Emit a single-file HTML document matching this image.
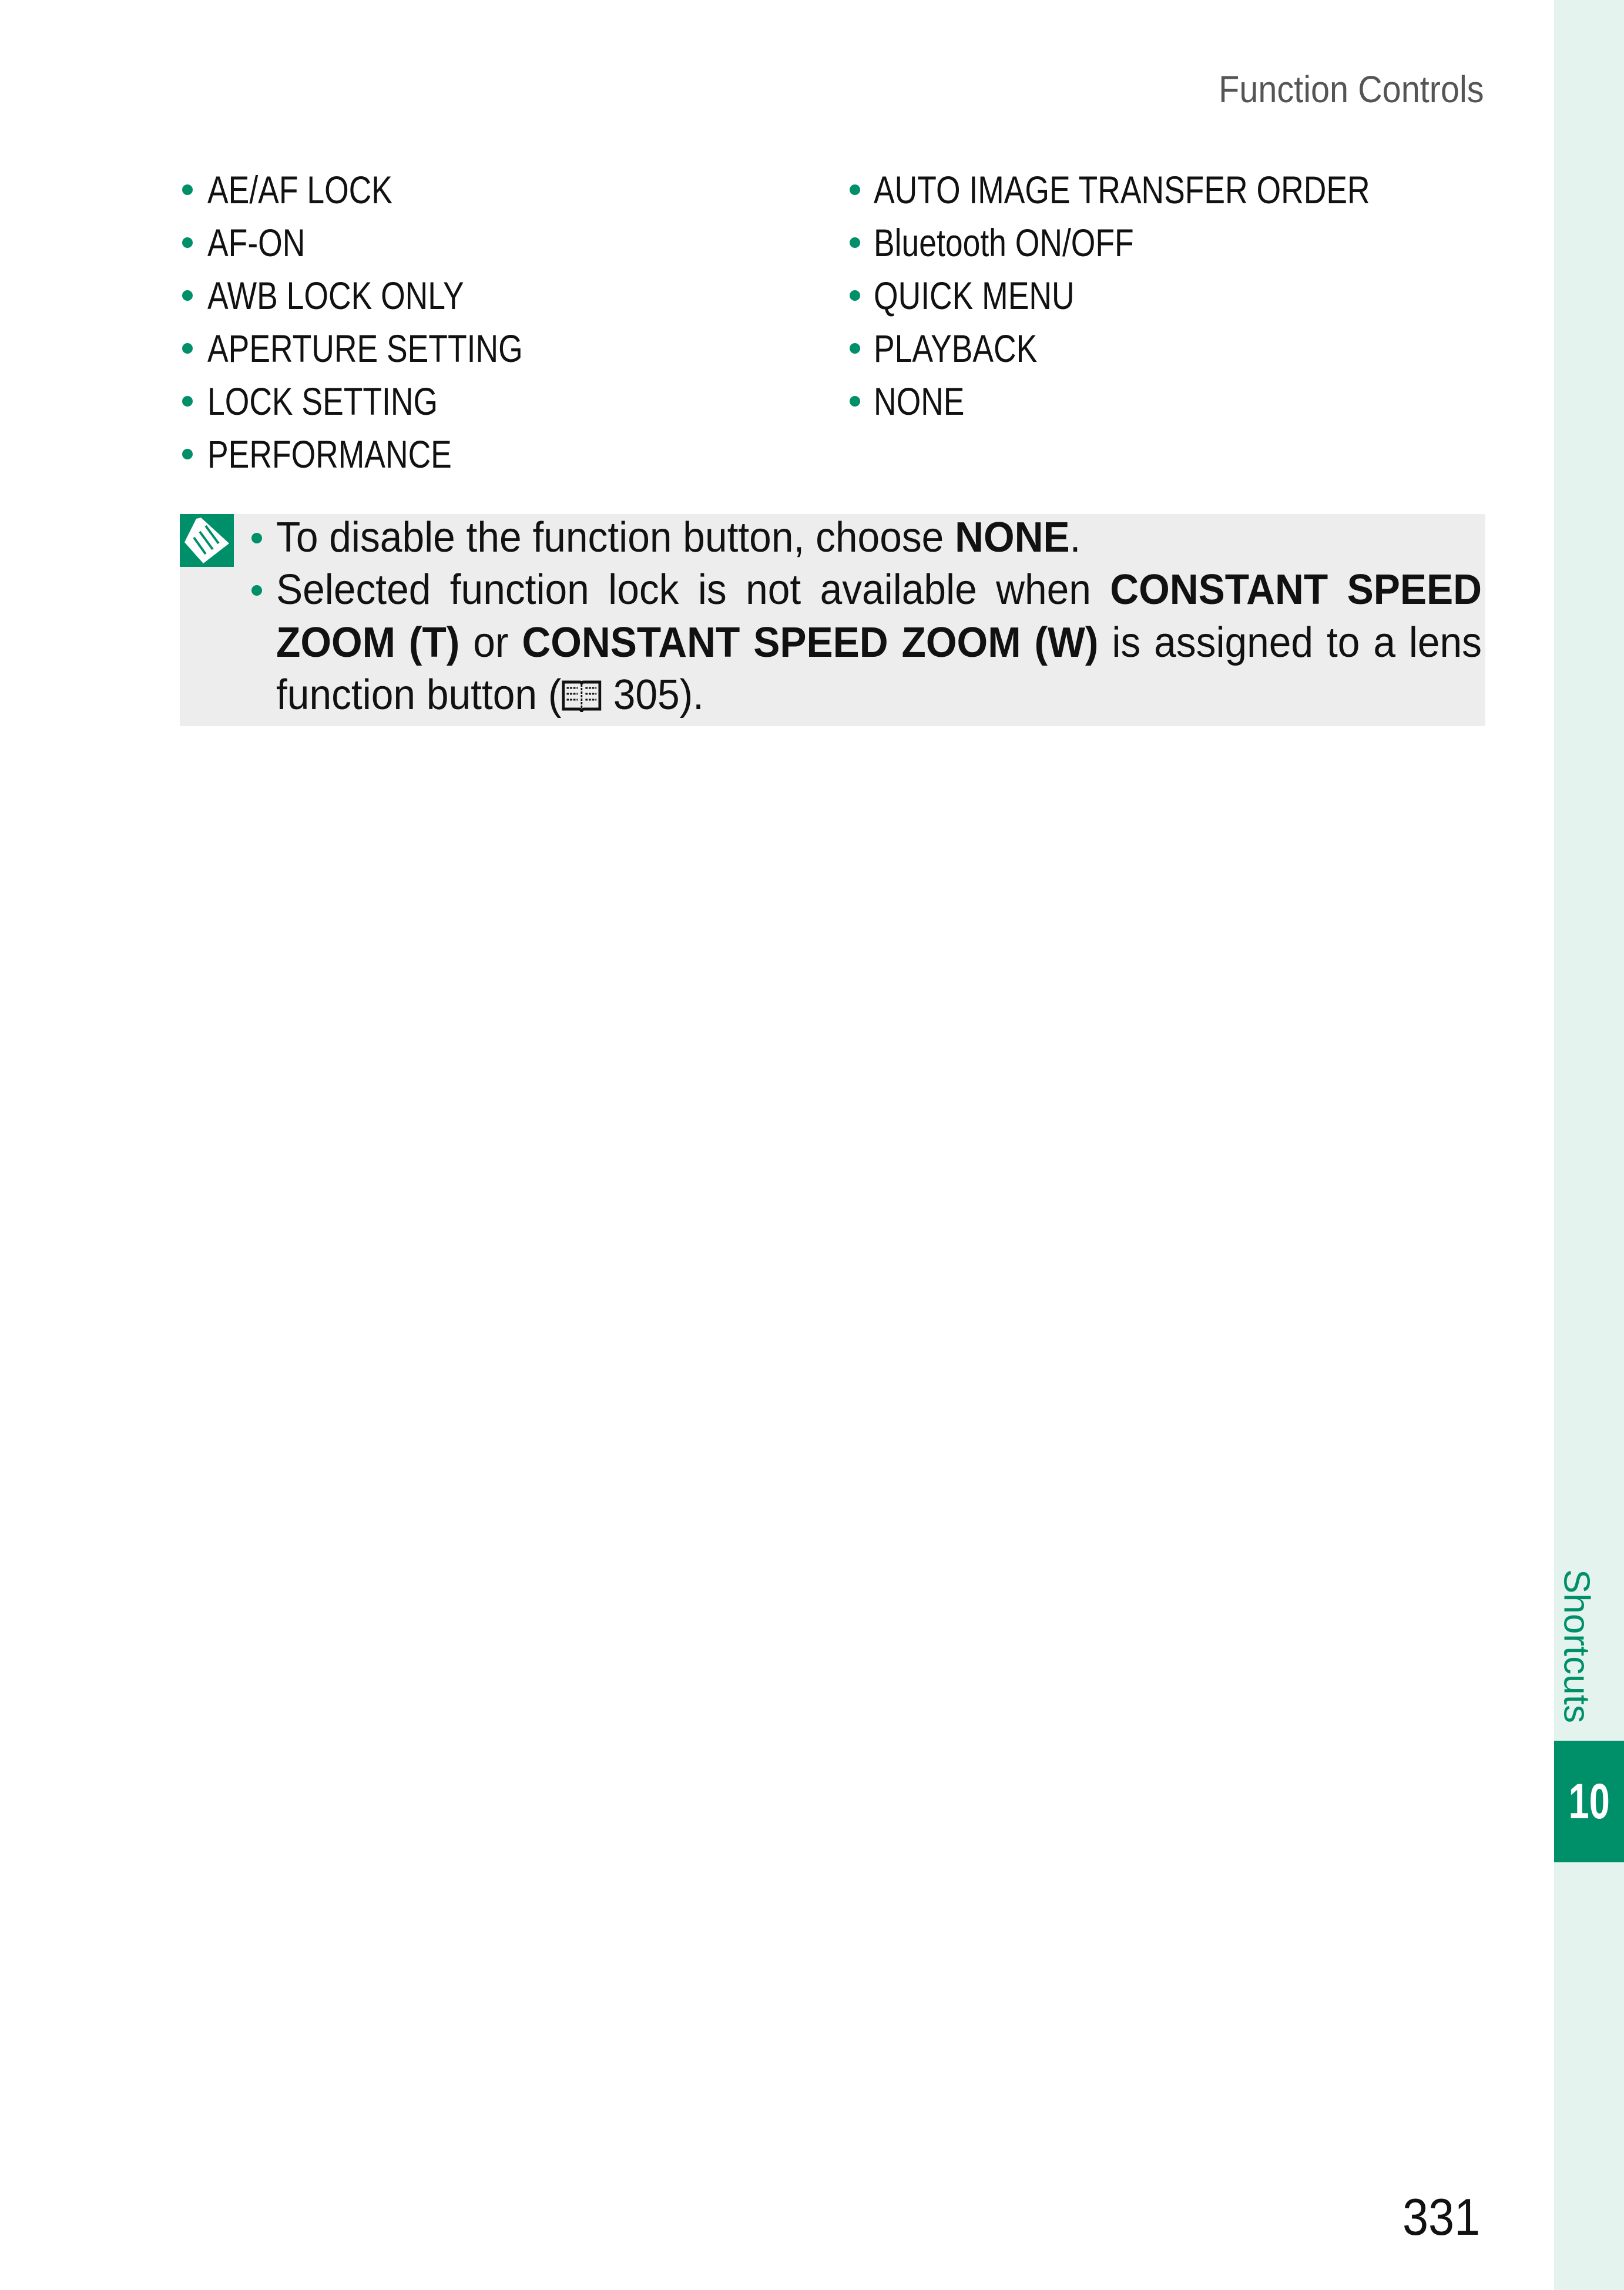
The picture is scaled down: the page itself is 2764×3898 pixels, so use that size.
<!DOCTYPE html>
<html><head><meta charset="utf-8"><style>
html,body{margin:0;padding:0;background:#fff}
body{width:2764px;height:3898px;position:relative;overflow:hidden;font-family:"Liberation Sans",sans-serif;color:#111}
.t{position:absolute;white-space:nowrap;transform-origin:left center;transform:scaleX(0.81);font-size:66px;line-height:90px}
.n{font-size:72px;transform:scaleX(0.94)}
.b{position:absolute;width:18px;height:18px;border-radius:50%;background:#009069}
.side{position:absolute;left:2645px;top:0;width:119px;height:3898px;background:#e4f3ee}
.tab{position:absolute;left:2645px;top:2963px;width:119px;height:207px;background:#009069;color:#fff;font-weight:bold;font-size:84px;text-align:center;line-height:207px}
.note{position:absolute;left:306px;top:875px;width:2222px;height:361px;background:#ededed}
.j{text-align:justify;text-align-last:justify}
</style></head><body>
<div class="side"></div>
<div class="tab"><span style="display:inline-block;transform:scaleX(0.75)">10</span></div>
<div style="position:absolute;left:2645px;top:2672px;width:70px;height:261px;">
<div style="position:absolute;left:38px;top:130px;transform:translate(-50%,-50%) rotate(90deg);color:#009069;font-size:62px;white-space:nowrap">Shortcuts</div></div>

<div class="t" style="right:238px;top:107px;transform-origin:right center;transform:scaleX(0.9);color:#555;font-size:64px">Function Controls</div>

<div class="b" style="left:310px;top:314px"></div><div class="t" style="left:353px;top:278px">AE/AF LOCK</div>
<div class="b" style="left:310px;top:404px"></div><div class="t" style="left:353px;top:368px">AF-ON</div>
<div class="b" style="left:310px;top:494px"></div><div class="t" style="left:353px;top:458px">AWB LOCK ONLY</div>
<div class="b" style="left:310px;top:584px"></div><div class="t" style="left:353px;top:548px">APERTURE SETTING</div>
<div class="b" style="left:310px;top:674px"></div><div class="t" style="left:353px;top:638px">LOCK SETTING</div>
<div class="b" style="left:310px;top:764px"></div><div class="t" style="left:353px;top:728px">PERFORMANCE</div>

<div class="b" style="left:1446px;top:314px"></div><div class="t" style="left:1487px;top:278px">AUTO IMAGE TRANSFER ORDER</div>
<div class="b" style="left:1446px;top:404px"></div><div class="t" style="left:1487px;top:368px">Bluetooth ON/OFF</div>
<div class="b" style="left:1446px;top:494px"></div><div class="t" style="left:1487px;top:458px">QUICK MENU</div>
<div class="b" style="left:1446px;top:584px"></div><div class="t" style="left:1487px;top:548px">PLAYBACK</div>
<div class="b" style="left:1446px;top:674px"></div><div class="t" style="left:1487px;top:638px">NONE</div>

<div class="note"></div>
<svg style="position:absolute;left:306px;top:875px" width="92" height="90" viewBox="0 0 92 90">
<rect width="92" height="90" fill="#009069"/>
<path d="M28 8 L36 6 L84 50 L40 84 L8 48 Z" fill="#fff"/>
<path d="M24 40 L44 68 M34 30 L56 60 M44 20 L66 50" stroke="#009069" stroke-width="4"/>
</svg>
<div class="b" style="left:428px;top:907px"></div>
<div class="t n" style="left:470px;top:870px">To disable the function button, choose <b>NONE</b>.</div>
<div class="b" style="left:428px;top:996px"></div>
<div class="t n j" style="left:470px;top:959px;width:2183px">Selected function lock is not available when <b>CONSTANT SPEED</b></div>
<div class="t n j" style="left:470px;top:1049px;width:2183px"><b>ZOOM (T)</b> or <b>CONSTANT SPEED ZOOM (W)</b> is assigned to a lens</div>
<div class="t n" style="left:470px;top:1138px">function button (<svg width="74" height="60" viewBox="0 0 74 60" style="vertical-align:-8px"><path d="M4 6 H34 Q37 6 37 10 Q37 6 40 6 H70 V52 H42 Q37 52 37 57 Q37 52 32 52 H4 Z" fill="none" stroke="#111" stroke-width="5"/><path d="M37 10 V55 M10 16h20M10 26h20M10 36h20M44 16h20M44 26h20M44 36h20" stroke="#111" stroke-width="3" stroke-dasharray="4 2"/></svg> 305).</div>

<div class="t" style="left:2387px;top:3729px;font-size:88px;transform:scaleX(0.9)">331</div>
</body></html>
